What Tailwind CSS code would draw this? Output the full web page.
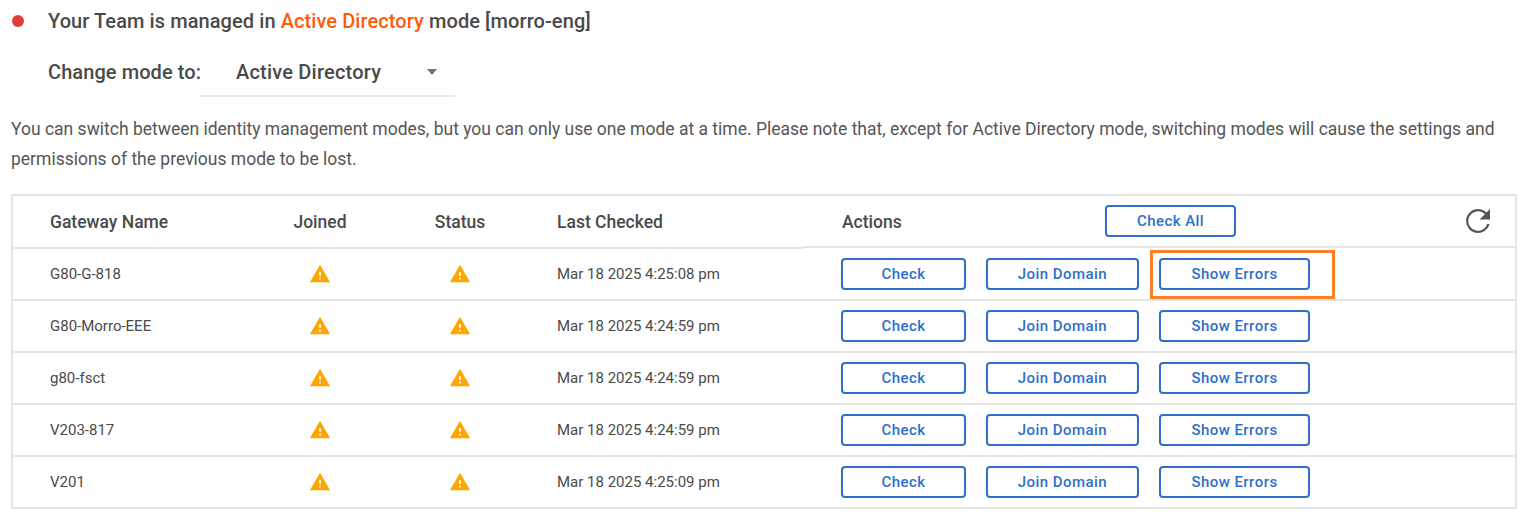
<!DOCTYPE html>
<html lang="en">
<head>
  <meta charset="UTF-8" />
  <title>Identity management</title>
  <script src="https://cdn.jsdelivr.net/npm/@tailwindcss/browser@4"></script>
</head>
<body class="bg-white font-['Roboto',sans-serif] text-[#4a4a4a] h-[524px] overflow-hidden">
  <main class="pl-[11px] pr-[11px]">

    <!-- Mode status -->
    <div class="flex items-center h-[22px] mt-[10px]">
      <span class="w-[12px] h-[12px] rounded-full bg-[#e03c3c] ml-[1px]"></span>
      <p class="ml-[24px] text-[20px] tracking-[0.08px] font-medium leading-[22px]">Your Team is managed in <span class="text-[#ff5a0a]">Active Directory</span> mode [morro-eng]</p>
    </div>

    <!-- Mode select -->
    <div class="flex items-start mt-[16px] ml-[37px]">
      <span class="text-[20px] tracking-[0.08px] font-medium leading-[48px] w-[152px] whitespace-nowrap">Change mode to:</span>
      <div class="w-[255px] h-[49px] border-b-2 border-[#ebebeb] flex items-center justify-between pl-[36px] pr-[18px]">
        <span class="text-[20px] tracking-[0.2px] font-medium">Active Directory</span>
        <svg class="w-[10px] h-[6px]" viewBox="0 0 10 6"><path d="M0 0h10L5 6z" fill="#757575"/></svg>
      </div>
    </div>

    <p class="mt-[17px] text-[17.5px] leading-[30px] text-[#555555] w-[1500px]">You can switch between identity management modes, but you can only use one mode at a time. Please note that, except for Active Directory mode, switching modes will cause the settings and permissions of the previous mode to be lost.</p>

    <!-- Gateways table -->
    <section class="relative mt-[20px] w-[1506px] border-2 border-[#e5e5e5] text-[15px]">
      <div class="relative flex items-center h-[53px] text-[17.5px] font-medium">
        <span class="w-[242px] pl-[37px]">Gateway Name</span>
        <span class="w-[130px] text-center">Joined</span>
        <span class="w-[150px] mr-[22px] text-center">Status</span>
        <span class="w-[284px]">Last Checked</span>
        <span class="w-[264px] pl-[1px]">Actions</span>
        <button class="mb-[3px] w-[131px] h-[32px] rounded-[4px] border-2 border-[#2f6fca] text-[#2f6fca] text-[15px] font-medium tracking-[0.45px]">Check All</button>
        <svg class="mb-[3px] ml-[224px] w-[36px] h-[36px]" viewBox="0 0 24 24"><path d="M17.65 6.35A7.96 7.96 0 0 0 12 4a8 8 0 1 0 7.75 10h-1.55A6.5 6.5 0 1 1 12 5.5c1.8 0 3.4.73 4.58 1.92L13 11h7V4z" fill="#555555"/></svg>
        <!-- the header rule steps up by a pixel past the Last Checked column -->
        <span class="absolute left-0 bottom-0 w-[791px] h-[2px] bg-[#e5e5e5]"></span>
        <span class="absolute left-[791px] right-0 bottom-[1px] h-[2px] bg-[#e5e5e5]"></span>
      </div>

      <div class="flex items-center h-[52px] border-b-2 border-[#e5e5e5]">
        <span class="w-[242px] pl-[37px]">G80-G-818</span>
        <span class="w-[130px] flex justify-center"><svg class="w-[22px] h-[22px]" viewBox="0 0 24 24"><path d="M1 21h22L12 2 1 21zm12-3h-2v-2h2v2zm0-4h-2v-4h2v4z" fill="#ffa600"/></svg></span>
        <span class="w-[150px] mr-[22px] flex justify-center"><svg class="w-[22px] h-[22px]" viewBox="0 0 24 24"><path d="M1 21h22L12 2 1 21zm12-3h-2v-2h2v2zm0-4h-2v-4h2v4z" fill="#ffa600"/></svg></span>
        <span class="w-[284px]">Mar 18 2025 4:25:08 pm</span>
        <div class="flex gap-[20px] font-medium tracking-[0.45px] text-[#2f6fca]">
          <button class="w-[125px] h-[32px] rounded-[4px] border-2 border-[#2f6fca]">Check</button>
          <button class="w-[153px] h-[32px] rounded-[4px] border-2 border-[#2f6fca]">Join Domain</button>
          <button class="w-[151px] h-[32px] rounded-[4px] border-2 border-[#2f6fca]">Show Errors</button>
        </div>
      </div>

      <div class="flex items-center h-[52px] border-b-2 border-[#e5e5e5]">
        <span class="w-[242px] pl-[37px]">G80-Morro-EEE</span>
        <span class="w-[130px] flex justify-center"><svg class="w-[22px] h-[22px]" viewBox="0 0 24 24"><path d="M1 21h22L12 2 1 21zm12-3h-2v-2h2v2zm0-4h-2v-4h2v4z" fill="#ffa600"/></svg></span>
        <span class="w-[150px] mr-[22px] flex justify-center"><svg class="w-[22px] h-[22px]" viewBox="0 0 24 24"><path d="M1 21h22L12 2 1 21zm12-3h-2v-2h2v2zm0-4h-2v-4h2v4z" fill="#ffa600"/></svg></span>
        <span class="w-[284px]">Mar 18 2025 4:24:59 pm</span>
        <div class="flex gap-[20px] font-medium tracking-[0.45px] text-[#2f6fca]">
          <button class="w-[125px] h-[32px] rounded-[4px] border-2 border-[#2f6fca]">Check</button>
          <button class="w-[153px] h-[32px] rounded-[4px] border-2 border-[#2f6fca]">Join Domain</button>
          <button class="w-[151px] h-[32px] rounded-[4px] border-2 border-[#2f6fca]">Show Errors</button>
        </div>
      </div>

      <div class="flex items-center h-[52px] border-b-2 border-[#e5e5e5]">
        <span class="w-[242px] pl-[37px]">g80-fsct</span>
        <span class="w-[130px] flex justify-center"><svg class="w-[22px] h-[22px]" viewBox="0 0 24 24"><path d="M1 21h22L12 2 1 21zm12-3h-2v-2h2v2zm0-4h-2v-4h2v4z" fill="#ffa600"/></svg></span>
        <span class="w-[150px] mr-[22px] flex justify-center"><svg class="w-[22px] h-[22px]" viewBox="0 0 24 24"><path d="M1 21h22L12 2 1 21zm12-3h-2v-2h2v2zm0-4h-2v-4h2v4z" fill="#ffa600"/></svg></span>
        <span class="w-[284px]">Mar 18 2025 4:24:59 pm</span>
        <div class="flex gap-[20px] font-medium tracking-[0.45px] text-[#2f6fca]">
          <button class="w-[125px] h-[32px] rounded-[4px] border-2 border-[#2f6fca]">Check</button>
          <button class="w-[153px] h-[32px] rounded-[4px] border-2 border-[#2f6fca]">Join Domain</button>
          <button class="w-[151px] h-[32px] rounded-[4px] border-2 border-[#2f6fca]">Show Errors</button>
        </div>
      </div>

      <div class="flex items-center h-[52px] border-b-2 border-[#e5e5e5]">
        <span class="w-[242px] pl-[37px]">V203-817</span>
        <span class="w-[130px] flex justify-center"><svg class="w-[22px] h-[22px]" viewBox="0 0 24 24"><path d="M1 21h22L12 2 1 21zm12-3h-2v-2h2v2zm0-4h-2v-4h2v4z" fill="#ffa600"/></svg></span>
        <span class="w-[150px] mr-[22px] flex justify-center"><svg class="w-[22px] h-[22px]" viewBox="0 0 24 24"><path d="M1 21h22L12 2 1 21zm12-3h-2v-2h2v2zm0-4h-2v-4h2v4z" fill="#ffa600"/></svg></span>
        <span class="w-[284px]">Mar 18 2025 4:24:59 pm</span>
        <div class="flex gap-[20px] font-medium tracking-[0.45px] text-[#2f6fca]">
          <button class="w-[125px] h-[32px] rounded-[4px] border-2 border-[#2f6fca]">Check</button>
          <button class="w-[153px] h-[32px] rounded-[4px] border-2 border-[#2f6fca]">Join Domain</button>
          <button class="w-[151px] h-[32px] rounded-[4px] border-2 border-[#2f6fca]">Show Errors</button>
        </div>
      </div>

      <div class="flex items-center h-[50px]">
        <span class="w-[242px] pl-[37px]">V201</span>
        <span class="w-[130px] flex justify-center"><svg class="w-[22px] h-[22px]" viewBox="0 0 24 24"><path d="M1 21h22L12 2 1 21zm12-3h-2v-2h2v2zm0-4h-2v-4h2v4z" fill="#ffa600"/></svg></span>
        <span class="w-[150px] mr-[22px] flex justify-center"><svg class="w-[22px] h-[22px]" viewBox="0 0 24 24"><path d="M1 21h22L12 2 1 21zm12-3h-2v-2h2v2zm0-4h-2v-4h2v4z" fill="#ffa600"/></svg></span>
        <span class="w-[284px]">Mar 18 2025 4:25:09 pm</span>
        <div class="flex gap-[20px] font-medium tracking-[0.45px] text-[#2f6fca]">
          <button class="w-[125px] h-[32px] rounded-[4px] border-2 border-[#2f6fca]">Check</button>
          <button class="w-[153px] h-[32px] rounded-[4px] border-2 border-[#2f6fca]">Join Domain</button>
          <button class="w-[151px] h-[32px] rounded-[4px] border-2 border-[#2f6fca]">Show Errors</button>
        </div>
      </div>

      <!-- Annotation highlight over the first Show Errors button -->
      <div class="absolute left-[1137px] top-[54px] w-[185px] h-[49px] border-[3px] border-[#ff7f27] pointer-events-none"></div>
    </section>
  </main>
</body>
</html>
